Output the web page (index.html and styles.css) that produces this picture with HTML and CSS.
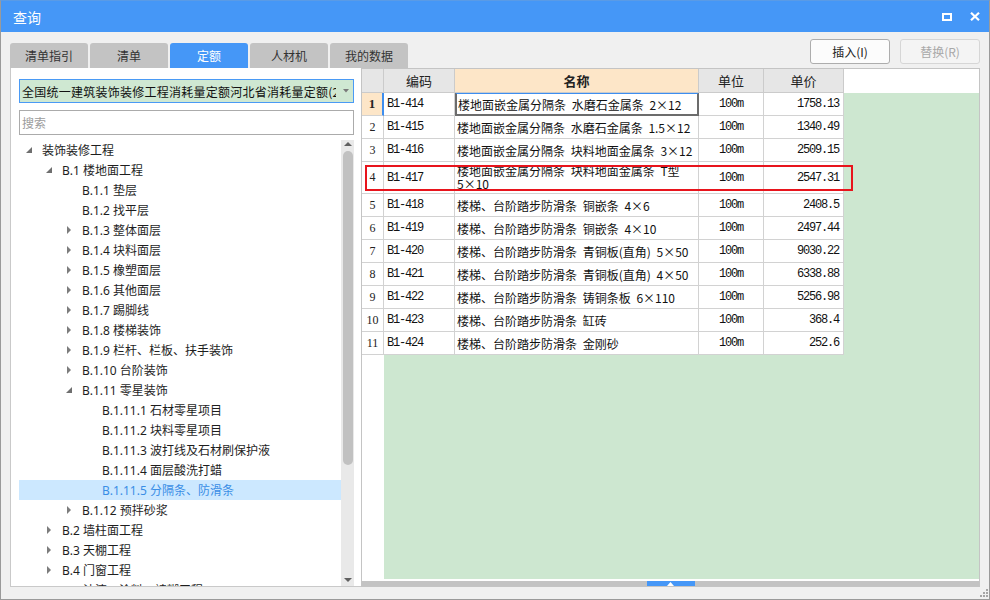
FILE: index.html
```html
<!DOCTYPE html>
<html lang="zh-CN">
<head>
<meta charset="utf-8">
<title>查询</title>
<link rel="stylesheet" href="styles.css">
</head>
<body>
<div class="window">
  <div class="titlebar">
    <span class="title">查询</span>
    <div class="win-btns">
      <svg class="ico-max" width="10" height="8" viewBox="0 0 10 8"><rect x="1" y="1" width="8" height="6" fill="none" stroke="#fff" stroke-width="2"/></svg>
      <svg class="ico-close" width="10" height="9" viewBox="0 0 10 9"><path d="M1 0.8 L9 8.2 M9 0.8 L1 8.2" stroke="#fff" stroke-width="2.2"/></svg>
    </div>
  </div>

  <div class="toolbar">
    <div class="tabs">
      <div class="tab">清单指引</div>
      <div class="tab">清单</div>
      <div class="tab active">定额</div>
      <div class="tab">人材机</div>
      <div class="tab">我的数据</div>
    </div>
    <div class="actions">
      <button class="btn">插入(I)</button>
      <button class="btn disabled">替换(R)</button>
    </div>
  </div>

  <div class="main">
    <div class="left">
      <div class="combo">
        <span class="combo-text">全国统一建筑装饰装修工程消耗量定额河北省消耗量定额(2012)</span>
        <span class="combo-arrow"><svg width="6" height="4" viewBox="0 0 6 4"><path d="M0 0 H6 L3 3.5 Z" fill="#7a7a7a"/></svg></span>
      </div>
      <div class="search">搜索</div>
      <div class="tree-wrap">
        <div class="tree">
          <div class="node l0"><span class="tg open"></span><span class="lbl">装饰装修工程</span></div>
          <div class="node l1"><span class="tg open"></span><span class="lbl">B.1 楼地面工程</span></div>
          <div class="node l2"><span class="tg"></span><span class="lbl">B.1.1 垫层</span></div>
          <div class="node l2"><span class="tg"></span><span class="lbl">B.1.2 找平层</span></div>
          <div class="node l2"><span class="tg closed"></span><span class="lbl">B.1.3 整体面层</span></div>
          <div class="node l2"><span class="tg closed"></span><span class="lbl">B.1.4 块料面层</span></div>
          <div class="node l2"><span class="tg closed"></span><span class="lbl">B.1.5 橡塑面层</span></div>
          <div class="node l2"><span class="tg closed"></span><span class="lbl">B.1.6 其他面层</span></div>
          <div class="node l2"><span class="tg closed"></span><span class="lbl">B.1.7 踢脚线</span></div>
          <div class="node l2"><span class="tg closed"></span><span class="lbl">B.1.8 楼梯装饰</span></div>
          <div class="node l2"><span class="tg closed"></span><span class="lbl">B.1.9 栏杆、栏板、扶手装饰</span></div>
          <div class="node l2"><span class="tg closed"></span><span class="lbl">B.1.10 台阶装饰</span></div>
          <div class="node l2"><span class="tg open"></span><span class="lbl">B.1.11 零星装饰</span></div>
          <div class="node l3"><span class="tg"></span><span class="lbl">B.1.11.1 石材零星项目</span></div>
          <div class="node l3"><span class="tg"></span><span class="lbl">B.1.11.2 块料零星项目</span></div>
          <div class="node l3"><span class="tg"></span><span class="lbl">B.1.11.3 波打线及石材刷保护液</span></div>
          <div class="node l3"><span class="tg"></span><span class="lbl">B.1.11.4 面层酸洗打蜡</span></div>
          <div class="node l3 selected"><span class="tg"></span><span class="lbl">B.1.11.5 分隔条、防滑条</span></div>
          <div class="node l2"><span class="tg closed"></span><span class="lbl">B.1.12 预拌砂浆</span></div>
          <div class="node l1"><span class="tg closed"></span><span class="lbl">B.2 墙柱面工程</span></div>
          <div class="node l1"><span class="tg closed"></span><span class="lbl">B.3 天棚工程</span></div>
          <div class="node l1"><span class="tg closed"></span><span class="lbl">B.4 门窗工程</span></div>
          <div class="node l1"><span class="tg closed"></span><span class="lbl">B.5 油漆、涂料、裱糊工程</span></div>
        </div>
        <div class="vscroll">
          <svg class="arr-up" width="8" height="4" viewBox="0 0 8 4"><path d="M0 4 L4 0 L8 4 Z" fill="#606060"/></svg>
          <div class="vthumb"></div>
          <svg class="arr-down" width="8" height="4" viewBox="0 0 8 4"><path d="M0 0 L8 0 L4 4 Z" fill="#606060"/></svg>
        </div>
      </div>
    </div>

    <div class="right">
      <div class="thead">
        <div class="hc c-num"></div>
        <div class="hc c-code">编码</div>
        <div class="hc c-name sorted">名称</div>
        <div class="hc c-unit">单位</div>
        <div class="hc c-price">单价</div>
        <div class="h-rest"></div>
      </div>
      <div class="tbody">
        <div class="rownums">
          <div class="rn current">1</div>
          <div class="rn">2</div>
          <div class="rn">3</div>
          <div class="rn tall">4</div>
          <div class="rn">5</div>
          <div class="rn">6</div>
          <div class="rn">7</div>
          <div class="rn">8</div>
          <div class="rn">9</div>
          <div class="rn">10</div>
          <div class="rn">11</div>
        </div>
        <div class="rows">
          <div class="row"><div class="c c-code">B1-414</div><div class="c c-name focus">楼地面嵌金属分隔条 水磨石金属条 2×12</div><div class="c c-unit">100m</div><div class="c c-price">1758.13</div></div>
          <div class="row"><div class="c c-code">B1-415</div><div class="c c-name">楼地面嵌金属分隔条 水磨石金属条 1.5×12</div><div class="c c-unit">100m</div><div class="c c-price">1340.49</div></div>
          <div class="row"><div class="c c-code">B1-416</div><div class="c c-name">楼地面嵌金属分隔条 块料地面金属条 3×12</div><div class="c c-unit">100m</div><div class="c c-price">2509.15</div></div>
          <div class="row tall"><div class="c c-code">B1-417</div><div class="c c-name wrap">楼地面嵌金属分隔条 块料地面金属条 T型<br>5×10</div><div class="c c-unit">100m</div><div class="c c-price">2547.31</div></div>
          <div class="row"><div class="c c-code">B1-418</div><div class="c c-name">楼梯、台阶踏步防滑条 铜嵌条 4×6</div><div class="c c-unit">100m</div><div class="c c-price">2408.5</div></div>
          <div class="row"><div class="c c-code">B1-419</div><div class="c c-name">楼梯、台阶踏步防滑条 铜嵌条 4×10</div><div class="c c-unit">100m</div><div class="c c-price">2497.44</div></div>
          <div class="row"><div class="c c-code">B1-420</div><div class="c c-name">楼梯、台阶踏步防滑条 青铜板(直角) 5×50</div><div class="c c-unit">100m</div><div class="c c-price">9030.22</div></div>
          <div class="row"><div class="c c-code">B1-421</div><div class="c c-name">楼梯、台阶踏步防滑条 青铜板(直角) 4×50</div><div class="c c-unit">100m</div><div class="c c-price">6338.88</div></div>
          <div class="row"><div class="c c-code">B1-422</div><div class="c c-name">楼梯、台阶踏步防滑条 铸铜条板 6×110</div><div class="c c-unit">100m</div><div class="c c-price">5256.98</div></div>
          <div class="row"><div class="c c-code">B1-423</div><div class="c c-name">楼梯、台阶踏步防滑条 缸砖</div><div class="c c-unit">100m</div><div class="c c-price">368.4</div></div>
          <div class="row"><div class="c c-code">B1-424</div><div class="c c-name">楼梯、台阶踏步防滑条 金刚砂</div><div class="c c-unit">100m</div><div class="c c-price">252.6</div></div>
        </div>
      </div>
      <div class="hscroll">
        <div class="hthumb"><svg width="7" height="4" viewBox="0 0 7 4"><path d="M0 4 L3.5 0 L7 4 Z" fill="#fff"/></svg></div>
      </div>
      <div class="mark"></div>
    </div>
  </div>

  <div class="statusbar">
    <svg width="8" height="8" viewBox="0 0 8 8" fill="#a5a5a5"><rect x="6" y="0" width="2" height="2"/><rect x="3" y="3" width="2" height="2"/><rect x="6" y="3" width="2" height="2"/><rect x="0" y="6" width="2" height="2"/><rect x="3" y="6" width="2" height="2"/><rect x="6" y="6" width="2" height="2"/></svg>
  </div>
</div>
</body>
</html>
```

FILE: styles.css
```css
* { box-sizing: border-box; }

body {
  margin: 0;
  width: 990px;
  height: 600px;
  overflow: hidden;
  font-family: "Noto Sans", "Noto Sans CJK SC", sans-serif;
  color: #1e1e1e;
}

.window {
  width: 990px;
  height: 600px;
  border: 1px solid #9a9a9a;
  border-top-color: #5a9be6;
  background: #f0f0f0;
  display: flex;
  flex-direction: column;
}

/* title bar */
.titlebar {
  flex: none;
  height: 31px;
  background: #4597f7;
  color: #fff;
  display: flex;
  align-items: center;
  padding: 0 9px 0 12px;
}
.title {
  flex: 1;
  font-family: "Noto Sans CJK SC", sans-serif;
  font-size: 14px;
}
.win-btns {
  display: flex;
  align-items: center;
  gap: 18px;
}
.win-btns svg { display: block; }

/* toolbar with tabs + buttons */
.toolbar {
  flex: none;
  height: 36px;
  display: flex;
  justify-content: space-between;
  padding: 0 9px 0 9px;
}
.tabs {
  align-self: flex-end;
  display: flex;
  gap: 2px;
}
.tab {
  width: 78px;
  height: 25px;
  background: #c3c3c3;
  border-radius: 3px 3px 0 0;
  font-family: "Noto Sans CJK SC", sans-serif;
  font-size: 12px;
  color: #333;
  display: flex;
  align-items: center;
  justify-content: center;
}
.tab.active {
  background: #4597f7;
  color: #fff;
}
.actions {
  align-self: flex-start;
  margin-top: 7px;
  display: flex;
  gap: 10px;
}
.btn {
  width: 80px;
  height: 25px;
  border: 1px solid #adadad;
  border-radius: 3px;
  background: #fcfcfc;
  font-family: "Noto Sans CJK SC", sans-serif;
  font-size: 12px;
  color: #222;
  padding: 0;
}
.btn.disabled {
  border-color: #d6d6d6;
  background: #f4f4f4;
  color: #a8a8a8;
}

/* main area */
.main {
  flex: none;
  height: 519px;
  display: flex;
  padding: 0 9px;
}

.left {
  width: 351px;
  background: #fff;
  border-left: 1px solid #c9c9c9;
  border-bottom: 1px solid #c9c9c9;
  padding: 11px 0 0 8px;
  display: flex;
  flex-direction: column;
}
.combo {
  flex: none;
  width: 335px;
  height: 24px;
  border: 1px solid #4a9af5;
  background: #cfe8d2;
  display: flex;
  align-items: center;
  margin-bottom: 7px;
}
.combo-text {
  flex: 1;
  overflow: hidden;
  white-space: nowrap;
  padding-left: 2px;
  font-family: "Noto Sans CJK SC", sans-serif;
  font-size: 12px;
  letter-spacing: 0.25px;
  color: #111;
}
.combo-arrow {
  width: 17px;
  display: flex;
  justify-content: center;
  padding-left: 2px;
}
.combo-arrow svg { display: block; }
.search {
  flex: none;
  width: 335px;
  height: 25px;
  border: 1px solid #ababab;
  background: #fff;
  padding-left: 2px;
  font-family: "Noto Sans CJK SC", sans-serif;
  font-size: 12px;
  color: #9c9c9c;
  display: flex;
  align-items: center;
  margin-bottom: 5px;
}
.tree-wrap {
  flex: 1;
  min-height: 0;
  width: 335px;
  display: flex;
}
.tree {
  flex: 1;
  overflow: hidden;
}
.node {
  height: 20px;
  display: flex;
  align-items: center;
  font-size: 12px;
  color: #1e1e1e;
  white-space: nowrap;
}
.node.l1 { padding-left: 20px; }
.node.l2 { padding-left: 40px; }
.node.l3 { padding-left: 60px; }
.node.selected {
  background: #cce8ff;
  color: #3a8ee6;
}
.tg {
  flex: none;
  width: 23px;
  height: 20px;
  position: relative;
}
.tg.open::after {
  content: "";
  position: absolute;
  left: 7px;
  top: 7px;
  width: 0;
  height: 0;
  border-left: 6px solid transparent;
  border-bottom: 6px solid #6f6f6f;
}
.tg.closed::after {
  content: "";
  position: absolute;
  left: 8px;
  top: 6px;
  width: 0;
  height: 0;
  border-top: 4px solid transparent;
  border-bottom: 4px solid transparent;
  border-left: 4px solid #7c7c7c;
}
.vscroll {
  flex: none;
  width: 13px;
  background: #e9e9e9;
  display: flex;
  flex-direction: column;
  align-items: center;
}
.arr-up { display: block; margin-top: 2px; flex: none; }
.vthumb {
  flex: none;
  width: 10px;
  height: 314px;
  margin-top: 5px;
  border-radius: 5px;
  background: #c1c1c1;
}
.arr-down { display: block; margin-top: auto; margin-bottom: 4px; flex: none; }

/* grid on the right */
.right {
  flex: 1;
  position: relative;
  background: #fff;
  border: 1px solid #c4c4c4;
  display: flex;
  flex-direction: column;
}
.thead {
  flex: none;
  height: 24px;
  display: flex;
}
.hc {
  height: 24px;
  background: #e6e6e6;
  border-right: 1px solid #cbcbcb;
  border-bottom: 1px solid #cbcbcb;
  font-family: "Noto Sans CJK SC", sans-serif;
  font-size: 13px;
  color: #222;
  display: flex;
  align-items: center;
  justify-content: center;
}
.hc.sorted {
  background: #fde6c8;
  font-weight: bold;
}
.h-rest {
  flex: 1;
  background: #fff;
}
.c-num { width: 22px; }
.c-code { width: 71px; }
.c-name { width: 244px; }
.c-unit { width: 65px; }
.c-price { width: 80px; }

.tbody {
  flex: 1;
  min-height: 0;
  display: flex;
}
.rownums {
  width: 22px;
  background: #fff;
}
.rn {
  height: 23px;
  border-right: 1px solid #d2d2d2;
  border-bottom: 1px solid #d2d2d2;
  font-family: "Liberation Serif", serif;
  font-size: 12px;
  color: #222;
  display: flex;
  align-items: center;
  justify-content: center;
}
.rn.tall { height: 32px; }
.rn.current {
  background: #fde6c8;
  font-weight: bold;
  font-size: 13px;
  border-right: 2px solid #3d8ef0;
}
.rows {
  flex: 1;
  background: #cde7d0;
}
.row {
  width: 460px;
  height: 23px;
  display: flex;
  background: #fff;
}
.row.tall { height: 32px; }
.c {
  height: 100%;
  border-right: 1px solid #d2d2d2;
  border-bottom: 1px solid #d2d2d2;
  display: flex;
  align-items: center;
  color: #111;
  white-space: nowrap;
  overflow: hidden;
}
.c.c-code,
.c.c-unit,
.c.c-price {
  font-family: "Liberation Mono", monospace;
  font-size: 12px;
  letter-spacing: -1.2px;
}
.c.c-code { padding-left: 3px; }
.c.c-unit { justify-content: center; }
.c.c-price { justify-content: flex-end; padding-right: 4px; }
.c.c-name {
  font-family: "Noto Sans CJK SC", sans-serif;
  font-size: 12px;
  word-spacing: 3px;
  padding-left: 2px;
}
.c.c-name.focus {
  border: 2px solid #6c6c6c;
  border-top: 1px solid #3d8ef0;
  padding-left: 1px;
}
.c.c-name.wrap {
  display: block;
  white-space: normal;
  line-height: 13px;
  padding-top: 2px;
}

.hscroll {
  flex: none;
  height: 5px;
  margin-top: 2px;
  background: #c3c3c3;
  display: flex;
  justify-content: center;
}
.hthumb {
  width: 48px;
  height: 5px;
  background: #4597f7;
  display: flex;
  justify-content: center;
  align-items: flex-end;
}
.hthumb svg { display: block; }

/* red annotation box over row 4 */
.mark {
  position: absolute;
  left: 3px;
  top: 96px;
  width: 488px;
  height: 26px;
  border: 2px solid #e8141c;
  pointer-events: none;
}

.statusbar {
  flex: 1;
  display: flex;
  justify-content: flex-end;
  align-items: center;
  padding-right: 1px;
}
.statusbar svg { display: block; }
```
